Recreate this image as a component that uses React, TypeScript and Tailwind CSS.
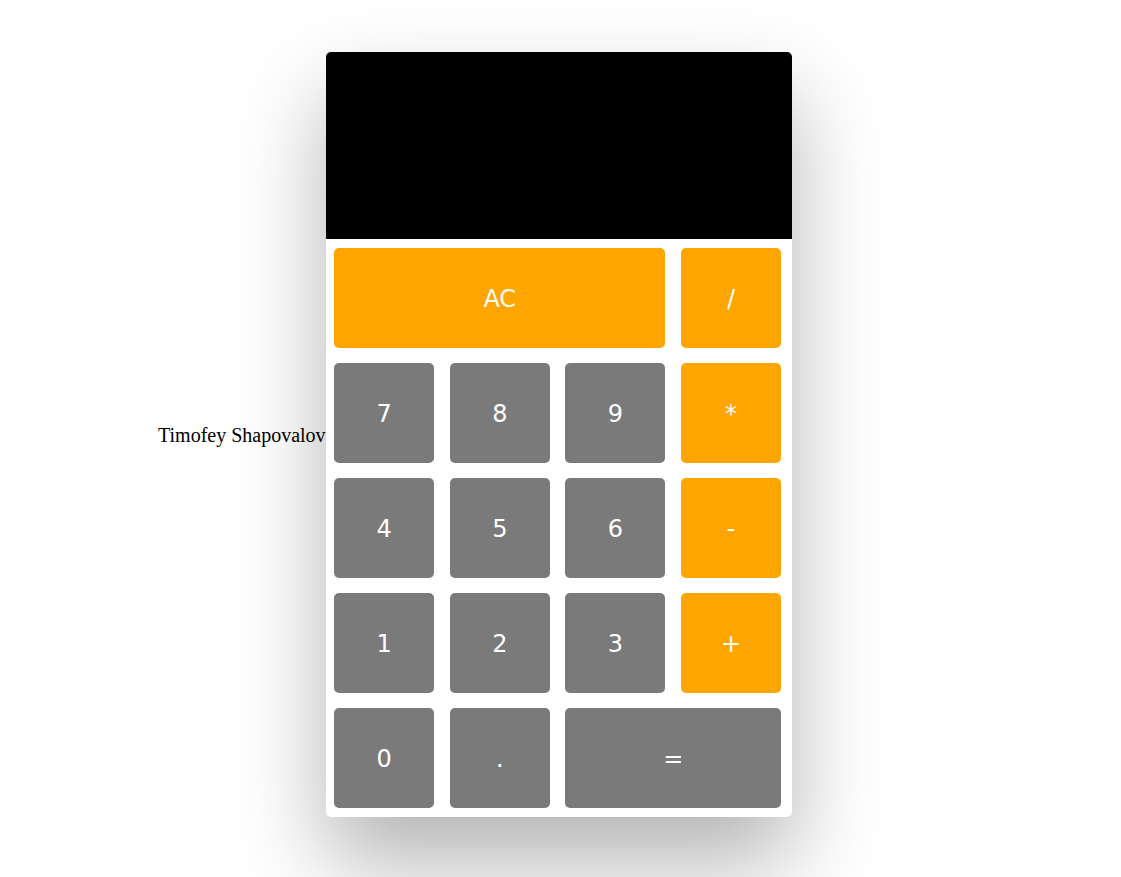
import React from "react";

type Btn = { label: string; kind: "op" | "num"; span?: number };

const rows: Btn[] = [
  { label: "AC", kind: "op", span: 3 },
  { label: "/", kind: "op" },
  { label: "7", kind: "num" },
  { label: "8", kind: "num" },
  { label: "9", kind: "num" },
  { label: "*", kind: "op" },
  { label: "4", kind: "num" },
  { label: "5", kind: "num" },
  { label: "6", kind: "num" },
  { label: "-", kind: "op" },
  { label: "1", kind: "num" },
  { label: "2", kind: "num" },
  { label: "3", kind: "num" },
  { label: "+", kind: "op" },
  { label: "0", kind: "num" },
  { label: ".", kind: "num" },
  { label: "=", kind: "num", span: 2 },
];

export default function App() {
  return (
    <div className="min-h-screen bg-white flex items-start pt-[52px] pl-[158px] overflow-hidden">
      <div className="flex items-center">
        <div className="text-[20px] text-black leading-none" style={{ fontFamily: '"Liberation Serif", serif' }}>
          Timofey Shapovalov
        </div>
        <div className="w-[466px] bg-white rounded-[5px] shadow-[0_45px_90px_rgba(0,0,0,0.3)] overflow-hidden">
          <div className="h-[187px] bg-black" />
          <div
            className="grid grid-cols-[100px_100px_100px_100px] auto-rows-[100px] gap-x-[15.67px] gap-y-[15px] pl-[8.5px] pt-[9px] pb-[9px]"
            style={{ fontFamily: '"DejaVu Sans", Verdana, sans-serif' }}
          >
            {rows.map((b) => (
              <div
                key={b.label}
                className={
                  "flex items-center justify-center rounded-[5px] text-white text-[24px] pt-[2px] " +
                  (b.kind === "op" ? "bg-[#ffa500] " : "bg-[#7a7a7a] ") +
                  (b.span === 3 ? "col-span-3" : b.span === 2 ? "col-span-2" : "")
                }
              >
                {b.label}
              </div>
            ))}
          </div>
        </div>
      </div>
    </div>
  );
}
